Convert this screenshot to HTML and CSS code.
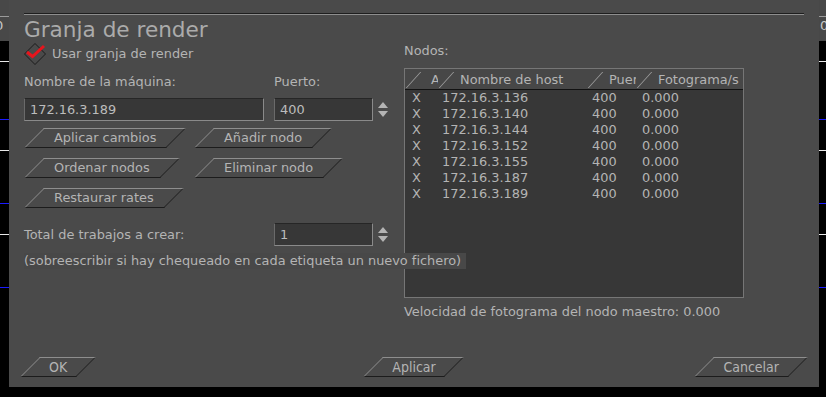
FILE: index.html
```html
<!DOCTYPE html>
<html lang="es">
<head>
    <meta charset="UTF-8">
    <meta name="viewport" content="width=device-width, initial-scale=1.0">
    <title>Granja de render</title>
    <link rel="stylesheet" href="styles.css">
</head>
<body>
    <div class="screen">
        <div class="side side-left">
            <div class="side-top"><span class="side-digit">0</span></div>
            <div class="side-body"></div>
        </div>

        <div class="dialog">
            <div class="rule"></div>
            <h1 class="title">Granja de render</h1>

            <div class="content">
                <div class="col-left">
                    <label class="check">
                        <svg class="check-box" width="22" height="22" viewBox="0 0 22 22">
                            <polygon points="11,0.5 21.5,11 11,21.5 0.5,11" fill="none" stroke="#1b1b1b" stroke-width="1"/>
                            <polyline points="3,9 8.5,13.5 20,3" fill="none" stroke="#e8141c" stroke-width="3" stroke-linejoin="miter"/>
                        </svg>
                        <span>Usar granja de render</span>
                    </label>

                    <div class="field-labels">
                        <span class="name-label">Nombre de la máquina:</span>
                        <span>Puerto:</span>
                    </div>
                    <div class="field-row">
                        <div class="input name-input">172.16.3.189</div>
                        <div class="input num-input">400</div>
                        <span class="spin"></span>
                    </div>

                    <div class="btn-grid">
                        <div class="slant">Aplicar cambios</div>
                        <div class="slant">Añadir nodo</div>
                        <div class="slant">Ordenar nodos</div>
                        <div class="slant">Eliminar nodo</div>
                        <div class="slant">Restaurar rates</div>
                    </div>

                    <div class="jobs-row">
                        <span class="jobs-label">Total de trabajos a crear:</span>
                        <div class="input num-input">1</div>
                        <span class="spin"></span>
                    </div>
                    <div class="note">(sobreescribir si hay chequeado en cada etiqueta un nuevo fichero)</div>
                </div>

                <div class="col-right">
                    <div class="nodes-label">Nodos:</div>
                    <div class="list">
                        <div class="list-head">
                            <div class="hcell">A</div>
                            <div class="hcell">Nombre de host</div>
                            <div class="hcell">Puerto</div>
                            <div class="hcell">Fotograma/s</div>
                        </div>
                        <div class="list-row"><span>X</span><span>172.16.3.136</span><span>400</span><span>0.000</span></div>
                        <div class="list-row"><span>X</span><span>172.16.3.140</span><span>400</span><span>0.000</span></div>
                        <div class="list-row"><span>X</span><span>172.16.3.144</span><span>400</span><span>0.000</span></div>
                        <div class="list-row"><span>X</span><span>172.16.3.152</span><span>400</span><span>0.000</span></div>
                        <div class="list-row"><span>X</span><span>172.16.3.155</span><span>400</span><span>0.000</span></div>
                        <div class="list-row"><span>X</span><span>172.16.3.187</span><span>400</span><span>0.000</span></div>
                        <div class="list-row"><span>X</span><span>172.16.3.189</span><span>400</span><span>0.000</span></div>
                    </div>
                    <div class="master">Velocidad de fotograma del nodo maestro: 0.000</div>
                </div>
            </div>

            <div class="footer">
                <div class="slant foot-btn foot-left">OK</div>
                <div class="slant foot-btn foot-mid">Aplicar</div>
                <div class="slant foot-btn foot-right">Cancelar</div>
            </div>
        </div>

        <div class="side side-right">
            <div class="side-top"><span class="side-digit">0</span></div>
            <div class="side-body"></div>
        </div>
    </div>
    <div class="bottom-bar"></div>
</body>
</html>
```

FILE: styles.css
```css
body {
    margin: 0;
    width: 826px;
    height: 397px;
    overflow: hidden;
    background: #000;
    font-family: "DejaVu Sans", sans-serif;
    font-size: 12.9px;
    color: #b4b4b4;
}
.screen {
    display: flex;
    height: 387px;
}
.side {
    display: flex;
    flex-direction: column;
}
.side-left {
    width: 9px;
}
.side-right {
    width: 7px;
}
.side-top {
    height: 41px;
    box-sizing: border-box;
    background: #484848;
    border-top: 16px solid #484848;
    overflow: hidden;
}
.side-digit {
    display: block;
    border-top: 1px solid #9a9a9a;
    padding-top: 2px;
    font-size: 13px;
    line-height: 14px;
    color: #c8c8c8;
}
.side-left .side-digit {
    text-indent: -5px;
}
.side-right .side-digit {
    text-indent: 1px;
}
.side-body {
    flex: 1;
    background: linear-gradient(to bottom,
        #000 0 20px, #e8e8e8 20px 21px,
        #000 21px 78px, #1a1aff 78px 79px,
        #000 79px 109px, #e8e8e8 109px 110px,
        #000 110px 162px, #1a1aff 162px 163px,
        #000 163px 193px, #e8e8e8 193px 194px,
        #000 194px 246px, #1a1aff 246px 247px,
        #000 247px);
}
.dialog {
    width: 810px;
    box-sizing: border-box;
    padding: 13px 15px 10px 15px;
    background: #4a4a4a;
    display: flex;
    flex-direction: column;
}
.rule {
    height: 1px;
    border-top: 1px solid #1e1e1e;
    background: #8e8e8e;
}
.title {
    margin: 3px 0 0;
    font-size: 21.6px;
    font-weight: normal;
    line-height: 24px;
    color: #ababab;
}
.content {
    display: flex;
}
.col-left {
    width: 380px;
    flex: none;
}
.col-right {
    width: 340px;
    flex: none;
}
.check {
    display: flex;
    align-items: center;
    gap: 6px;
    height: 21px;
    margin-top: 1px;
}
.check-box {
    flex: none;
}
.field-labels {
    display: flex;
    margin-top: 10px;
    line-height: 16px;
}
.name-label {
    width: 250px;
}
.field-row,
.jobs-row {
    display: flex;
    align-items: center;
}
.field-row {
    margin-top: 8px;
}
.input {
    box-sizing: border-box;
    height: 23px;
    padding: 0 5px;
    line-height: 21px;
    background: #373737;
    border: 1px solid #8a8a8a;
    border-top-color: #262626;
    border-left-color: #6a6a6a;
    color: #bcbcbc;
}
.name-input {
    width: 240px;
    margin-right: 10px;
}
.num-input {
    width: 99px;
}
.spin {
    display: flex;
    flex-direction: column;
    gap: 3px;
    margin-left: 5px;
}
.spin::before,
.spin::after {
    content: "";
    border-left: 5.5px solid transparent;
    border-right: 5.5px solid transparent;
}
.spin::before {
    border-bottom: 6px solid #b4b4b4;
}
.spin::after {
    border-top: 6px solid #b4b4b4;
}
.btn-grid {
    display: grid;
    grid-template-columns: 170px auto;
    justify-items: start;
    row-gap: 10px;
    margin-top: 7px;
}
.slant {
    position: relative;
    height: 20px;
    padding: 0 30px;
    display: flex;
    align-items: center;
    justify-content: center;
    white-space: nowrap;
    line-height: 16px;
}
.slant::before {
    content: "";
    position: absolute;
    top: 0;
    bottom: 0;
    left: 10px;
    right: 10px;
    transform: skewX(-45deg);
    border-top: 1px solid #8e8e8e;
    border-left: 1px solid #8e8e8e;
    border-bottom: 1px solid #1c1c1c;
    border-right: 1px solid #1c1c1c;
}
.jobs-row {
    margin-top: 15px;
}
.jobs-label {
    width: 250px;
}
.note {
    position: relative;
    z-index: 1;
    display: inline-block;
    margin-top: 7px;
    padding-right: 5px;
    line-height: 16px;
    white-space: nowrap;
    background: #484848;
}
.nodes-label {
    margin-top: 1px;
    line-height: 16px;
}
.list {
    box-sizing: border-box;
    height: 230px;
    margin-top: 9px;
    background: #373737;
    border: 1px solid #767676;
    overflow: hidden;
}
.list-head {
    display: grid;
    grid-template-columns: 33px 149px 49px 1fr;
    height: 20px;
    background: #474747;
    border-bottom: 1px solid #121212;
}
.hcell {
    position: relative;
    overflow: hidden;
    padding-left: 22px;
    line-height: 21px;
    white-space: nowrap;
}
.hcell:first-child {
    padding-left: 26px;
}
.hcell::before {
    content: "";
    position: absolute;
    left: 8px;
    top: 3px;
    bottom: 1px;
    border-left: 1px solid #a0a0a0;
    transform: skewX(-42deg);
}
.list-row {
    display: grid;
    grid-template-columns: 30px 150px 50px 1fr;
    padding-left: 7px;
    height: 16px;
    line-height: 16px;
}
.list-row:first-of-type {
    margin-top: 1px;
}
.master {
    margin-top: 6px;
    line-height: 16px;
}
.footer {
    margin: auto -4px 0;
    display: grid;
    grid-template-columns: 1fr auto 1fr;
}
.foot-btn {
    padding: 0 29px;
    font-family: "DejaVu Sans Condensed", "DejaVu Sans", sans-serif;
    font-stretch: condensed;
    font-size: 14px;
}
.foot-left {
    justify-self: start;
}
.foot-mid {
    justify-self: center;
}
.foot-right {
    justify-self: end;
}
.bottom-bar {
    height: 10px;
    background: #000;
}
```
